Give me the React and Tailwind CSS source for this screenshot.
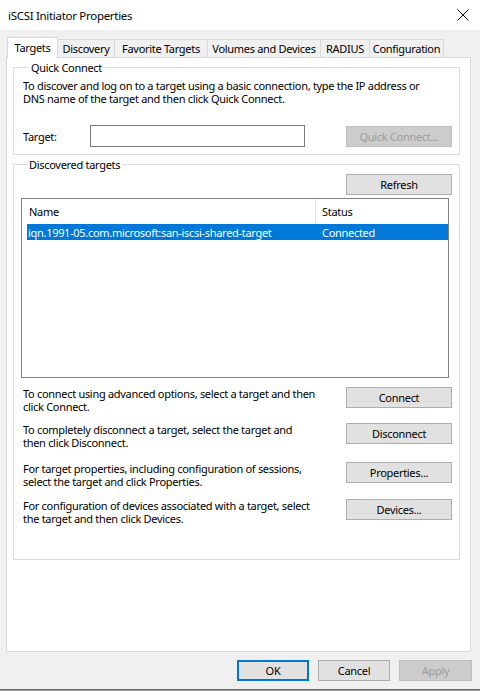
import React from 'react';

// Win10-style button (Segoe UI look-alike via Noto Sans)
function Button({ children, width = 'w-[106px]', disabled = false, primary = false }) {
    let look = 'bg-[#e1e1e1] border border-[#adadad] text-black';
    if (disabled) look = 'bg-[#cccccc] border border-[#bfbfbf] text-[#9d9d9d]';
    if (primary) look = 'bg-[#e1e1e1] border-2 border-[#0078d7] text-black';
    return (
        <button className={`${width} h-[21px] shrink-0 flex items-center justify-center text-[11px] leading-[13px] ${look}`}>
            {children}
        </button>
    );
}

function Tab({ label, width, selected = false }) {
    if (selected) {
        return (
            <div className={`${width} relative z-10 -mb-px h-[21px] flex items-center justify-center bg-white border border-b-0 border-[#d9d9d9] pb-[2px]`}>
                {label}
            </div>
        );
    }
    return (
        <div className={`${width} h-[18px] flex items-center justify-center bg-[#f0f0f0] border-t border-r border-[#d9d9d9]`}>
            {label}
        </div>
    );
}

const actions = [
    { text: ['To connect using advanced options, select a target and then', 'click Connect.'], button: 'Connect', gap: 'mt-0' },
    { text: ['To completely disconnect a target, select the target and', 'then click Disconnect.'], button: 'Disconnect', gap: 'mt-[10px]' },
    { text: ['For target properties, including configuration of sessions,', 'select the target and click Properties.'], button: 'Properties...', gap: 'mt-[13px]' },
    { text: ['For configuration of devices associated with a target, select', 'the target and then click Devices.'], button: 'Devices...', gap: 'mt-[11px]' },
];

export default function App() {
    return (
        <div className="w-[480px] h-[691px] overflow-hidden bg-[#f0f0f0] flex flex-col font-['Noto_Sans',sans-serif] text-[11px] leading-[13px] tracking-[-0.3px] text-black">
            {/* Title bar */}
            <div className="h-[30px] bg-white flex items-center justify-between pl-[8px] pr-[11px]">
                <span className="text-[11.5px] leading-[15px]">iSCSI Initiator Properties</span>
                <svg width="12" height="12" viewBox="0 0 12 12">
                    <path d="M0.5 0.5 L11.5 11.5 M11.5 0.5 L0.5 11.5" stroke="#000" strokeWidth="1" fill="none" />
                </svg>
            </div>

            {/* Tabs */}
            <div className="mt-[7px] ml-[7px] flex items-end">
                <Tab label="Targets" width="w-[51px]" selected />
                <Tab label="Discovery" width="w-[57px]" />
                <Tab label="Favorite Targets" width="w-[93px]" />
                <Tab label="Volumes and Devices" width="w-[113px]" />
                <Tab label="RADIUS" width="w-[49px]" />
                <Tab label="Configuration" width="w-[74px]" />
            </div>

            {/* Tab panel */}
            <div className="ml-[6px] w-[465px] h-[595px] bg-white border border-[#d9d9d9] pl-[6px] pr-[10px] pt-[3px]">
                {/* Quick Connect */}
                <fieldset className="border border-[#dcdcdc] pl-[9px] pr-[7px] pb-[7px]">
                    <legend className="ml-[6px] px-[2px] whitespace-nowrap">Quick Connect</legend>
                    <p className="mt-[5px] whitespace-nowrap">
                        To discover and log on to a target using a basic connection, type the IP address or
                        <br />
                        DNS name of the target and then click Quick Connect.
                    </p>
                    <div className="mt-[20px] h-[22px] flex items-center">
                        <span className="w-[67px]">Target:</span>
                        <div className="w-[215px] h-[22px] border border-[#7a7a7a] bg-white"></div>
                        <div className="flex-grow"></div>
                        <Button disabled>Quick Connect...</Button>
                    </div>
                </fieldset>

                {/* Discovered targets */}
                <fieldset className="mt-[3px] border border-[#dcdcdc] pl-[7px] pr-[7px] pb-[34px]">
                    <legend className="ml-[6px] px-[2px] whitespace-nowrap">Discovered targets</legend>
                    <div className="mt-[3px] flex justify-end">
                        <Button>Refresh</Button>
                    </div>
                    <div className="mt-[3px] w-[428px] h-[180px] border border-[#828282] bg-white">
                        <div className="h-[25px] flex">
                            <div className="w-[294px] h-full pl-[7px] flex items-center border-r border-[#e5e5e5]">Name</div>
                            <div className="h-full pl-[6px] flex items-center">Status</div>
                        </div>
                        <div className="ml-[5px] h-[16px] flex items-center bg-[#0078d7] text-white">
                            <div className="w-[289px] pl-[1px] whitespace-nowrap">iqn.1991-05.com.microsoft:san-iscsi-shared-target</div>
                            <div className="pl-[6px]">Connected</div>
                        </div>
                    </div>

                    <div className="mt-[9px] pl-[2px]">
                        {actions.map((a) => (
                            <div key={a.button} className={`${a.gap} flex items-start justify-between`}>
                                <p className="whitespace-nowrap">
                                    {a.text[0]}
                                    <br />
                                    {a.text[1]}
                                </p>
                                <Button>{a.button}</Button>
                            </div>
                        ))}
                    </div>
                </fieldset>
            </div>

            {/* Dialog buttons */}
            <div className="mt-[8px] pr-[8px] flex justify-end gap-[9px]">
                <Button width="w-[72px]" primary>OK</Button>
                <Button width="w-[72px]">Cancel</Button>
                <Button width="w-[73px]" disabled>Apply</Button>
            </div>

            <div className="flex-grow"></div>
            <div className="h-[1px] bg-[#6d6d6d]"></div>
            <div className="h-[1px] bg-[#9a9a9a]"></div>
        </div>
    );
}
